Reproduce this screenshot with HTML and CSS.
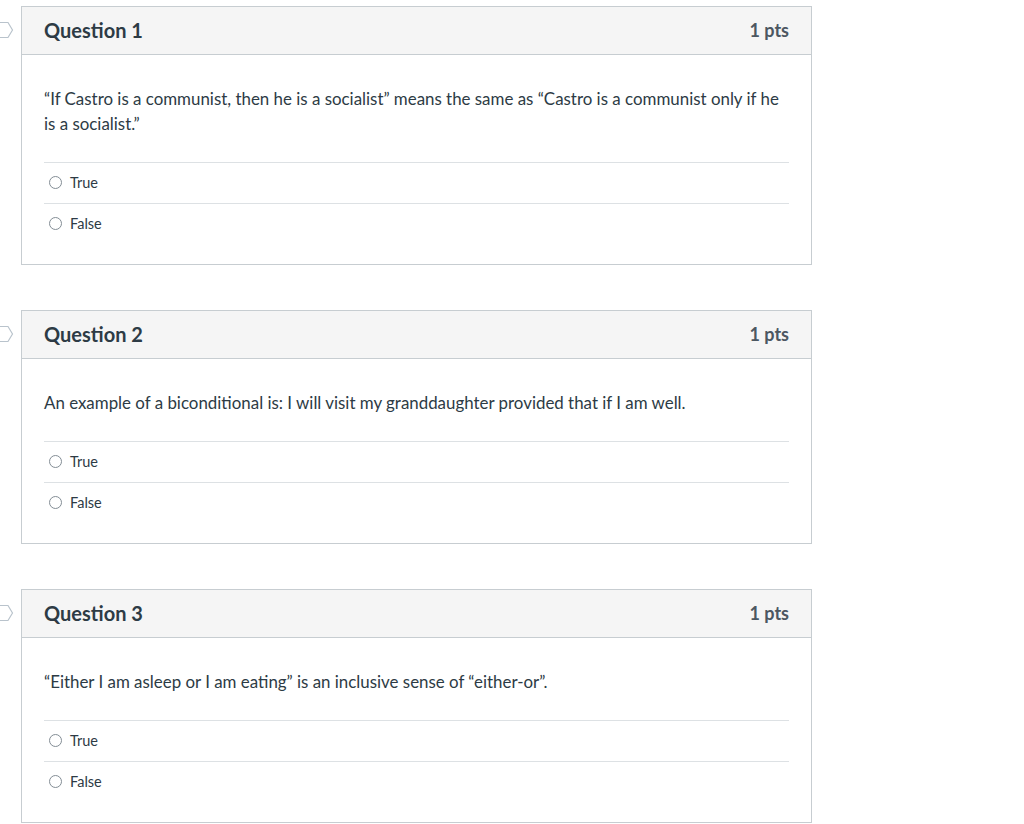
FILE: index.html
```html
<!DOCTYPE html>
<html lang="en">
<head>
<meta charset="utf-8">
<title>Quiz</title>
<link rel="stylesheet" href="styles.css">
</head>
<body>
<div class="quiz">
  <div class="question">
    <svg class="flag" width="14" height="18" viewBox="0 0 14 18"><path d="M-4 1.5 H8 L12.5 9 L8 16.5 H-4" fill="none" stroke="#b9c3cc" stroke-width="1.2"/></svg>
    <div class="q-header">
      <span class="q-title">Question 1</span>
      <span class="q-pts">1 pts</span>
    </div>
    <div class="q-body">
      <div class="q-text">“If Castro is a communist, then he is a socialist” means the same as “Castro is a communist only if he is a socialist.”</div>
      <div class="answers">
        <label class="answer"><span class="radio"></span>True</label>
        <label class="answer"><span class="radio"></span>False</label>
      </div>
    </div>
  </div>
  <div class="question">
    <svg class="flag" width="14" height="18" viewBox="0 0 14 18"><path d="M-4 1.5 H8 L12.5 9 L8 16.5 H-4" fill="none" stroke="#b9c3cc" stroke-width="1.2"/></svg>
    <div class="q-header">
      <span class="q-title">Question 2</span>
      <span class="q-pts">1 pts</span>
    </div>
    <div class="q-body">
      <div class="q-text">An example of a biconditional is: I will visit my granddaughter provided that if I am well.</div>
      <div class="answers">
        <label class="answer"><span class="radio"></span>True</label>
        <label class="answer"><span class="radio"></span>False</label>
      </div>
    </div>
  </div>
  <div class="question">
    <svg class="flag" width="14" height="18" viewBox="0 0 14 18"><path d="M-4 1.5 H8 L12.5 9 L8 16.5 H-4" fill="none" stroke="#b9c3cc" stroke-width="1.2"/></svg>
    <div class="q-header">
      <span class="q-title">Question 3</span>
      <span class="q-pts">1 pts</span>
    </div>
    <div class="q-body">
      <div class="q-text">“Either I am asleep or I am eating” is an inclusive sense of “either-or”.</div>
      <div class="answers">
        <label class="answer"><span class="radio"></span>True</label>
        <label class="answer"><span class="radio"></span>False</label>
      </div>
    </div>
  </div>
</div>
</body>
</html>
```
FILE: styles.css
```css
* { box-sizing: border-box; }
html, body {
  margin: 0;
  background: #fff;
}
body {
  font-family: Lato, "Helvetica Neue", Arial, sans-serif;
  color: #2d3b45;
}
.quiz {
  display: flex;
  flex-direction: column;
  gap: 45px;
  padding: 6px 0 0 21px;
  width: 812px;
}
.question {
  position: relative;
  border: 1px solid #c7cdd1;
}
.flag {
  position: absolute;
  left: -22px;
  top: 14px;
}
.q-header {
  display: flex;
  justify-content: space-between;
  align-items: center;
  height: 48px;
  padding: 0 22px 2px;
  background: #f5f5f5;
  border-bottom: 1px solid #c7cdd1;
}
.q-title {
  font-size: 20px;
  font-weight: 700;
  color: #2d3b45;
}
.q-pts {
  font-size: 18px;
  font-weight: 700;
  color: #4c5761;
}
.q-body {
  padding: 31px 22px 20px;
}
.q-text {
  font-size: 16.9px;
  line-height: 25px;
}
.answers {
  margin-top: 26px;
}
.answer {
  display: flex;
  align-items: center;
  height: 41px;
  padding: 0 0 2px 5px;
  border-top: 1px solid #dde1e4;
  font-size: 14.5px;
  color: #2d3b45;
}
.radio {
  width: 13px;
  height: 13px;
  border: 1px solid #838d95;
  border-radius: 50%;
  margin-right: 8px;
  flex: none;
}
```
